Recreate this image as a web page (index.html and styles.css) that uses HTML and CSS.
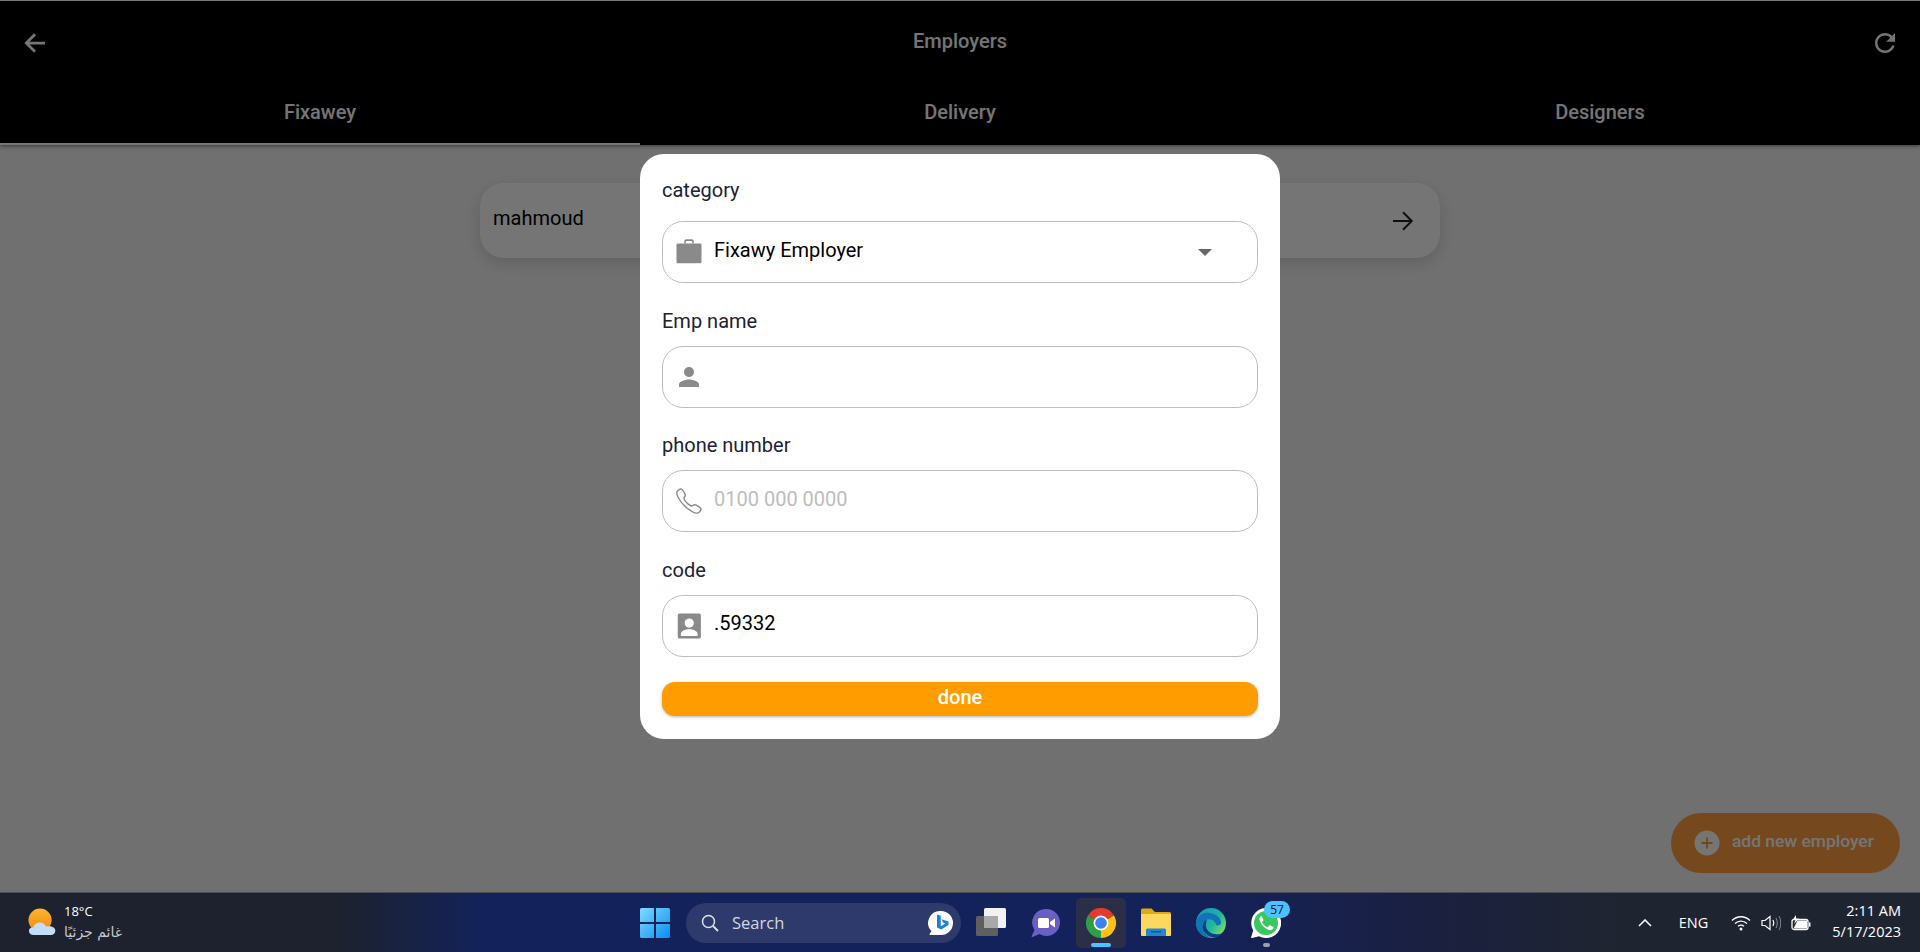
FILE: index.html
```html
<!DOCTYPE html>
<html>
<head>
<meta charset="utf-8">
<title>Employers</title>
<link rel="stylesheet" href="styles.css">
</head>
<body>
<div id="screen">
  <div id="app">
    <div id="header">
      <div class="toolbar">
        <svg class="bar-icon" viewBox="0 0 24 24"><path d="M20 12H5M12 5l-7 7 7 7" fill="none" stroke="currentColor" stroke-width="2.2"/></svg>
        <div class="title">Employers</div>
        <svg class="bar-icon" viewBox="0 0 24 24"><path fill="currentColor" d="M17.65 6.35C16.2 4.9 14.21 4 12 4c-4.42 0-7.99 3.58-7.99 8s3.57 8 7.99 8c3.73 0 6.84-2.55 7.73-6h-2.08c-.82 2.33-3.04 4-5.65 4-3.31 0-6-2.69-6-6s2.69-6 6-6c1.66 0 3.14.69 4.22 1.78L13 11h7V4l-2.35 2.35z"/></svg>
      </div>
      <div class="tabs">
        <div class="tab active">Fixawey</div>
        <div class="tab">Delivery</div>
        <div class="tab">Designers</div>
      </div>
    </div>

    <div id="content">
      <div class="card">
        <span class="card-name">mahmoud</span>
        <svg class="card-arrow" viewBox="0 0 24 24"><path d="M4 12h15M12 5l7 7-7 7" fill="none" stroke="currentColor" stroke-width="1.6"/></svg>
      </div>
    </div>

    <div class="fab">
      <svg class="fab-icon" viewBox="0 0 26 26"><circle cx="13" cy="13" r="12.5" fill="#fff"/><path d="M13 7.5v11M7.5 13h11" stroke="#ff9a1f" stroke-width="1.8"/></svg>
      <span class="fab-text">add new employer</span>
    </div>

    <div id="scrim">
      <div id="dialog">
        <div class="field-label first">category</div>
        <div class="field">
          <svg class="field-icon" viewBox="0 0 24 24"><path d="M3 5.2h18a1 1 0 011 1V20a1 1 0 01-1 1H3a1 1 0 01-1-1V6.2a1 1 0 011-1z"/><path d="M8.8 5.2V3.5a1 1 0 011-1h4.400a1 1 0 011 1v1.700" fill="none" stroke="#8a8a8a" stroke-width="1.3"/></svg>
          <span class="value">Fixawy Employer</span>
          <span class="caret"></span>
        </div>

        <div class="field-label">Emp name</div>
        <div class="field">
          <svg class="field-icon" viewBox="0 0 24 24"><path d="M12 12c2.21 0 4-1.79 4-4s-1.79-4-4-4-4 1.79-4 4 1.79 4 4 4zm0 2c-2.67 0-8 1.34-8 4v2h16v-2c0-2.66-5.33-4-8-4z"/></svg>
        </div>

        <div class="field-label">phone number</div>
        <div class="field">
          <svg class="field-icon" viewBox="0 0 512 512"><path fill="none" stroke="#8a8a8a" stroke-width="24" d="M451 374c-15.88-16-54.34-39.35-73-48.76-24.3-12.24-26.3-13.24-45.4.95-12.74 9.47-21.21 17.93-36.12 14.75s-47.31-21.11-75.68-49.39-47.34-61.62-50.53-76.48 5.41-23.23 14.79-36c13.22-18 12.22-21 .92-45.3-8.81-18.9-32.84-57-48.9-72.8C119.9 44 119.9 47 108.83 51.6A160.15 160.15 0 0083 65.37C67 76 58.12 84.83 51.91 98.1s-9 44.38 23.07 102.64 54.57 88.05 101.14 134.49S258.5 406.64 310.85 436c64.76 36.27 89.6 29.2 102.91 23s22.18-15 32.83-31a159.09 159.09 0 0013.8-25.8C465 391.17 468 391.17 451 374z"/></svg>
          <span class="value placeholder">0100 000 0000</span>
        </div>

        <div class="field-label">code</div>
        <div class="field">
          <svg class="field-icon" viewBox="0 0 24 24"><rect x="3" y="2" width="18.5" height="20" rx="1.5"/><circle cx="12.2" cy="9.6" r="3.7" fill="#fff"/><path d="M5.5 20v-1.500c0-2.500 3.500-3.900 6.700-3.900s6.700 1.400 6.700 3.900V20z" fill="#fff"/></svg>
          <span class="value">.59332</span>
        </div>

        <div class="done-button">done</div>
      </div>
    </div>
  </div>

  <div id="taskbar">
    <div class="weather">
      <svg class="weather-icon" viewBox="0 0 30 30">
        <defs><linearGradient id="sun" x1="0" y1="0" x2="0" y2="1"><stop offset="0" stop-color="#fdb62f"/><stop offset="1" stop-color="#f08a12"/></linearGradient></defs>
        <circle cx="13.5" cy="12.5" r="12" fill="url(#sun)"/>
        <path d="M7 28c-3 0-5-2-5-4.3S4 20 6.5 20c.8-3 3.5-5 6.800-5 3.200 0 5.500 1.800 6.500 4.300 1-.5 2-.5 3-.2 1.200-.6 2.500-.3 3.500.5 1.700.4 3 2 3 4 0 2.500-2 4.400-4.500 4.400z" fill="#c3dcfa"/>
      </svg>
      <div class="weather-text">
        <div class="weather-temp">18°C</div>
        <div class="weather-sub">غائم جزئيًا</div>
      </div>
    </div>

    <div class="task-center">
      <div class="tile">
        <svg class="task-icon" viewBox="0 0 30 30">
          <defs><linearGradient id="win" x1="0" y1="0" x2="1" y2="1"><stop offset="0" stop-color="#7fdcff"/><stop offset="1" stop-color="#0a8df0"/></linearGradient></defs>
          <path fill="url(#win)" d="M0 1.5A1.5 1.5 0 011.5 0H14v14H0zM16 0h12.5A1.5 1.5 0 0130 1.5V14H16zM0 16h14v14H1.5A1.5 1.5 0 010 28.5zM16 16h14v12.5a1.5 1.5 0 01-1.5 1.5H16z"/>
        </svg>
      </div>
      <div class="search">
        <svg class="search-icon" viewBox="0 0 18 18"><circle cx="7.5" cy="7.5" r="6" fill="none" stroke="#dfe1ea" stroke-width="1.5"/><path d="M12 12l5 5" stroke="#dfe1ea" stroke-width="1.8"/></svg>
        <span>Search</span>
        <svg class="bing-icon" viewBox="0 0 26 26">
          <path d="M13 1a12 12 0 110 24H2.5c-1 0-1.2-.8-.7-1.400l1.700-2.300A12 12 0 0113 1z" fill="#fff"/>
          <path d="M9 4.500l3.800 1.300v10.500l4.500-2.700-2.300-1-1.300-3.400 6.800 2.300v3.600l-7.300 4.300L9 17.500z" fill="#1b7fe0"/>
        </svg>
      </div>
      <div class="tile">
        <svg class="task-icon" viewBox="0 0 30 30">
          <rect x="0" y="8" width="22" height="20" rx="1.5" fill="#5f5f5f"/>
          <rect x="8" y="0" width="22" height="20" rx="1.5" fill="#f2f2f2"/>
          <rect x="8" y="8" width="14" height="12" fill="#a9a9a9"/>
        </svg>
      </div>
      <div class="tile">
        <svg class="task-icon" viewBox="0 0 30 30">
          <path d="M15.5 1a13.5 13.5 0 110 27c-2.5 0-5-.7-7-2l-7 3c-.7.2-1-.3-.8-.9L3.5 22A13.500 13.500 0 0115.500 1z" fill="#6a5fc4"/>
          <rect x="7" y="10" width="11" height="10" rx="1.5" fill="#fff"/>
          <path d="M19 14l5-3.5v9L19 16z" fill="#fff"/>
        </svg>
      </div>
      <div class="tile open">
        <svg class="task-icon" viewBox="0 0 30 30">
          <path d="M15 15L2 7.5A15 15 0 0128 7.5z" fill="#e33b2e"/>
          <path d="M15 15L28 7.5A15 15 0 0115 30z" fill="#fbc116"/>
          <path d="M15 15L15 30A15 15 0 012 7.5z" fill="#2f9e47"/>
          <circle cx="15" cy="15" r="7.5" fill="#fff"/>
          <circle cx="15" cy="15" r="5.8" fill="#3b82f0"/>
        </svg>
        <span class="run-mark wide"></span>
      </div>
      <div class="tile">
        <svg class="task-icon" viewBox="0 0 30 30">
          <path d="M0 2a1.5 1.5 0 011.5-1.5h9L14 4h14.5A1.5 1.5 0 0130 5.5V10H0z" fill="#e0a913"/>
          <path d="M0 6h30v21a1 1 0 01-1 1H1a1 1 0 01-1-1z" fill="#fdd85c"/>
          <path d="M5 28v-6a1.5 1.5 0 011.5-1.5h17A1.5 1.5 0 0125 22v6z" fill="#1f86d1"/>
          <rect x="10" y="23" width="10" height="1.5" fill="#0d4f8f"/>
        </svg>
      </div>
      <div class="tile">
        <svg class="task-icon" viewBox="0 0 30 30">
          <defs><linearGradient id="edge" x1="0" y1="0" x2="1" y2="0.8"><stop offset="0" stop-color="#1a8fc9"/><stop offset="0.6" stop-color="#1fb5a0"/><stop offset="1" stop-color="#86e05a"/></linearGradient></defs>
          <circle cx="15" cy="15" r="15" fill="url(#edge)"/>
          <path d="M0 15C1 7 8 4 14 5c6 .8 10 4 11 9 .4 2.5-1.5 3.5-4 3.2-1.5-.2-1-1.2-1.5-2.2-1.5-3-5-4.5-8.5-3.5C7 12.5 5 17 6.5 21c1.5 4 5 7.5 8.5 9C7 30 .5 23 0 15z" fill="#0f74b8"/>
          <path d="M11 11.5c-4 1.5-5.5 6-4 10 1.5 4 6 8.5 12.5 7.8 3-.6 5.5-2 7.5-4.3-3.5 1.5-8 1.8-11 .5-3.5-1.5-6-4.5-6-8 0-2.5.5-4.5 1-6z" fill="#0b3f8c"/>
        </svg>
      </div>
      <div class="tile">
        <svg class="task-icon" viewBox="0 0 30 30">
          <path d="M15 0a15 15 0 11-7 28.2L1 30c-.8.2-1-.3-.8-1l2-6.5A15 15 0 0115 0z" fill="#fff"/>
          <circle cx="15" cy="15" r="12" fill="#37c95f"/>
          <path d="M10.5 8c-1.5.5-2.5 2-2 4 1 4 5.5 9 10 10 2 .4 3.5-.7 4-2.2.1-.5 0-.8-.5-1l-3-1.5c-.5-.2-.8 0-1 .3l-1 1.3c-.3.3-.6.3-1 .2-2-.8-3.800-2.500-4.800-4.500-.2-.4 0-.6.200-.9l.8-1c.2-.3.200-.6.100-.9l-1.200-3c-.2-.5-.5-.8-1-.7z" fill="#fff"/>
        </svg>
        <span class="badge">57</span>
        <span class="run-mark"></span>
      </div>
    </div>

    <div class="tray">
      <svg class="tray-chevron" viewBox="0 0 14 8"><path d="M1 7l6-6 6 6" fill="none" stroke="#fff" stroke-width="1.6"/></svg>
      <span class="lang">ENG</span>
      <svg class="tray-icon" viewBox="0 0 20 16"><g fill="none" stroke="#fff" stroke-width="1.3"><path d="M1 5.5c5-5 13-5 18 0"/><path d="M4 8.5c3.5-3.3 8.500-3.300 12 0"/><path d="M7 11.300c1.800-1.500 4.200-1.500 6 0"/></g><circle cx="10" cy="14" r="1.5" fill="#fff"/></svg>
      <svg class="tray-icon" viewBox="0 0 20 16"><path d="M1 5.500h3L9 1.500v13l-5-4H1z" fill="none" stroke="#fff" stroke-width="1.2"/><path d="M12 5c1 1.800 1 4.200 0 6" fill="none" stroke="#fff" stroke-width="1.2"/><path d="M15 3c1.700 3 1.700 7 0 10M18 1c2.300 4.300 2.300 9.700 0 14" fill="none" stroke="#8b8f99" stroke-width="1"/></svg>
      <svg class="tray-icon" viewBox="0 0 20 16"><rect x="1" y="4.5" width="16" height="10" rx="2" fill="none" stroke="#fff" stroke-width="1.3"/><path d="M2.500 13.500l4-8h9.500v8z" fill="#fff"/><rect x="18" y="7.5" width="1.5" height="4" fill="#fff"/><path d="M5 0L1.500 5h3L3 9l5-5.500H5z" fill="#fff"/></svg>
      <div class="clock">
        <div class="clock-time">2:11 AM</div>
        <div>5/17/2023</div>
      </div>
    </div>
  </div>
</div>
</body>
</html>
```

FILE: styles.css
```css
html, body {
  margin: 0;
  height: 100%;
  overflow: hidden;
}

body {
  font-family: Roboto, "Liberation Sans", sans-serif;
}

#screen {
  display: flex;
  flex-direction: column;
  height: 952px;
}

#app {
  position: relative;
  flex: 1;
  display: flex;
  flex-direction: column;
  background: #f4f4f4;
}

/* header + tabs */
#header {
  position: relative;
  height: 144px;
  background: #000;
  border-top: 1px solid #fff;
  box-shadow: 0 1px 4px rgba(0, 0, 0, 0.5);
  color: #fff;
}

.toolbar {
  display: flex;
  align-items: center;
  justify-content: space-between;
  height: 80px;
  padding: 0 20px;
}

.bar-icon {
  width: 30px;
  height: 30px;
  margin-top: 3px;
}

.title {
  font-size: 20px;
  font-weight: 500;
}

.tabs {
  display: flex;
  height: 64px;
}

.tab {
  flex: 1;
  display: flex;
  align-items: center;
  justify-content: center;
  padding-bottom: 2px;
  font-size: 20px;
  font-weight: 500;
}

.tab.active {
  box-shadow: inset 0 -2px 0 #fff;
}

/* list */
#content {
  flex: 1;
  padding: 38px 480px;
}

.card {
  display: flex;
  align-items: center;
  justify-content: space-between;
  height: 75px;
  padding: 0 22px 0 13px;
  border-radius: 24px;
  background: #fff;
  box-shadow: 0 5px 16px rgba(0, 0, 0, 0.14);
  font-size: 20px;
  color: #000;
}

.card-name {
  margin-top: -5px;
}

.card-arrow {
  width: 30px;
  height: 30px;
  color: #222;
}

.fab {
  position: absolute;
  right: 20px;
  bottom: 19px;
  display: flex;
  align-items: center;
  width: 229px;
  height: 60px;
  padding-left: 23px;
  box-sizing: border-box;
  border-radius: 30px;
  background: #ff9f3f;
  color: #fff;
  font-size: 17.4px;
  font-weight: 500;
}

.fab-icon {
  width: 26px;
  height: 26px;
  margin-right: 12px;
}

.fab-text {
  margin-top: -5px;
}

/* dialog */
#scrim {
  position: absolute;
  top: 0;
  left: 0;
  right: 0;
  bottom: 0;
  display: flex;
  align-items: center;
  justify-content: center;
  padding-top: 1px;
  background: rgba(0, 0, 0, 0.54);
}

#dialog {
  width: 640px;
  height: 585px;
  box-sizing: border-box;
  padding: 24px 22px 22px;
  border-radius: 24px;
  background: #fff;
}

.field-label {
  height: 24px;
  line-height: 24px;
  margin-top: 25.67px;
  margin-bottom: 13px;
  font-size: 20px;
  color: #1b2233;
}

.field-label.first {
  margin-top: 0;
  margin-bottom: 19px;
}

.field {
  display: flex;
  align-items: center;
  height: 62px;
  box-sizing: border-box;
  padding-left: 11px;
  border: 1px solid #bdbdbd;
  border-radius: 21px;
}

.field-icon {
  flex: none;
  width: 30px;
  height: 30px;
  margin-right: 10px;
  fill: #8a8a8a;
}

.value {
  flex: 1;
  margin-top: -5px;
  font-size: 20px;
  color: #000;
}

.value.placeholder {
  color: #bdbdbd;
}

.caret {
  width: 0;
  height: 0;
  margin-right: 45px;
  border-left: 7px solid transparent;
  border-right: 7px solid transparent;
  border-top: 7px solid #666;
}

.done-button {
  height: 34px;
  line-height: 31px;
  margin-top: 25.5px;
  border-radius: 13px;
  background: #ff9d00;
  box-shadow: 0 1px 3px rgba(0, 0, 0, 0.3);
  color: #fff;
  font-size: 20px;
  font-weight: 500;
  text-align: center;
}

/* windows taskbar */
#taskbar {
  display: grid;
  grid-template-columns: 603px auto 1fr;
  align-items: center;
  height: 60px;
  padding: 0 19px 0 27px;
  border-top: 1px solid #4a4d55;
  box-sizing: border-box;
  background: linear-gradient(90deg, #1d222e 0, #1d222e 340px, #13225a 480px, #14225a 1200px, #1a2040 1430px, #1f2530 1620px);
  color: #fff;
  font-family: "Open Sans", "Noto Sans", "DejaVu Sans", sans-serif;
  font-size: 13px;
}

.weather {
  display: flex;
  align-items: center;
}

.weather-icon {
  width: 29px;
  height: 29px;
  margin-right: 8px;
}

.weather-text {
  line-height: 20px;
  font-size: 13px;
}

.weather-temp {
  margin-top: -2px;
  margin-bottom: 1px;
}

.weather-sub {
  color: #c6c8cd;
  font-family: "DejaVu Sans", sans-serif;
  font-size: 14px;
}

.task-center {
  display: flex;
  align-items: center;
  gap: 5px;
}

.tile {
  position: relative;
  display: flex;
  align-items: center;
  justify-content: center;
  width: 50px;
  height: 50px;
  border-radius: 5px;
  box-sizing: border-box;
}

.tile.open {
  background: #2a2f47;
}

.task-icon {
  width: 30px;
  height: 30px;
}

.run-mark {
  position: absolute;
  left: 22px;
  bottom: 1px;
  width: 7px;
  height: 4px;
  border-radius: 2px;
  background: #9aa0ac;
}

.run-mark.wide {
  left: 15px;
  width: 20px;
  background: #4cc2ff;
}

.badge {
  position: absolute;
  top: 3px;
  left: 23px;
  width: 26px;
  height: 17px;
  border-radius: 9px;
  background: #4cc2ff;
  color: #10141f;
  font-size: 12px;
  line-height: 17px;
  text-align: center;
}

.search {
  display: flex;
  align-items: center;
  width: 275px;
  height: 40px;
  margin-left: 1px;
  padding: 0 7px 0 15px;
  box-sizing: border-box;
  border-radius: 20px;
  background: #2e3a6b;
  color: #d5d7e0;
  font-size: 16.5px;
}

.search-icon {
  width: 18px;
  height: 18px;
  margin-right: 13px;
}

.bing-icon {
  width: 26px;
  height: 26px;
  margin-left: auto;
}

.tray {
  display: flex;
  align-items: center;
  justify-content: flex-end;
}

.tray-chevron {
  width: 14px;
  height: 8px;
  margin-right: 27px;
}

.lang {
  margin-right: 23px;
  font-size: 14.5px;
}

.tray-icon {
  width: 20px;
  height: 16px;
  margin-right: 10px;
}

.clock {
  margin-left: 11px;
  line-height: 20px;
  text-align: right;
  font-size: 14.5px;
}

.clock-time {
  margin-top: -2px;
  margin-bottom: 1px;
}
```
